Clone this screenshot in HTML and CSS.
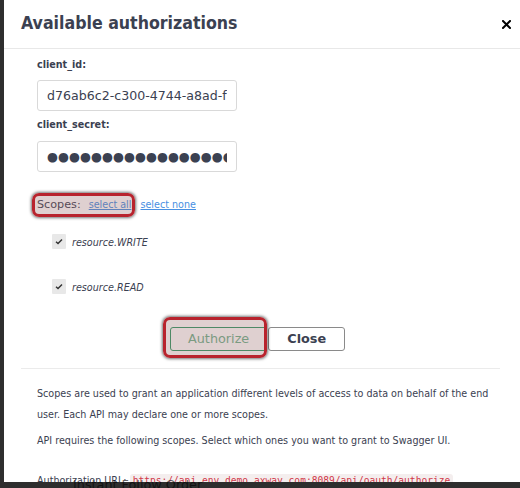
FILE: index.html
```html
<!DOCTYPE html>
<html lang="en">
<head>
<meta charset="utf-8">
<title>Available authorizations</title>
<link rel="stylesheet" href="styles.css">
</head>
<body>
<div class="page-text">Instant Follow Order</div>
<div class="modal">
  <div class="modal-header">
    <h3 class="title">Available authorizations</h3>
    <button class="close-x" aria-label="Close"><svg width="9" height="9" viewBox="0 0 9 9"><path d="M1 1L8 8M8 1L1 8" stroke="#000" stroke-width="2" stroke-linecap="square"/></svg></button>
  </div>
  <div class="modal-body">
    <label class="field-label">client_id:</label>
    <input class="field" type="text" value="d76ab6c2-c300-4744-a8ad-f3b1c9e2a7d4">
    <label class="field-label second">client_secret:</label>
    <input class="field secret" type="text" value="●●●●●●●●●●●●●●●●●●●●●●●●">
    <div class="scopes-row">
      <span class="scopes-title">Scopes:</span>
      <a class="link">select all</a>
      <a class="link">select none</a>
      <span class="hl hl-scopes"></span>
    </div>
    <div class="check-row">
      <span class="check-box"><svg width="8" height="7" viewBox="0 0 8 7"><path d="M1 3.8L3 5.6L7 1.4" fill="none" stroke="#333" stroke-width="1.4"/></svg></span>
      <span class="check-label">resource.WRITE</span>
    </div>
    <div class="check-row">
      <span class="check-box"><svg width="8" height="7" viewBox="0 0 8 7"><path d="M1 3.8L3 5.6L7 1.4" fill="none" stroke="#333" stroke-width="1.4"/></svg></span>
      <span class="check-label">resource.READ</span>
    </div>
    <div class="btn-row">
      <div class="btn-wrap">
        <button class="btn btn-auth">Authorize</button>
        <span class="hl hl-auth"></span>
      </div>
      <button class="btn btn-close">Close</button>
    </div>
  </div>
  <div class="sep"></div>
  <div class="desc">
    <p>Scopes are used to grant an application different levels of access to data on behalf of the end user. Each API may declare one or more scopes.</p>
    <p>API requires the following scopes. Select which ones you want to grant to Swagger UI.</p>
    <p class="url">Authorization URL: <code>https://api.env.demo.axway.com:8089/api/oauth/authorize</code></p>
  </div>
</div>
</body>
</html>
```
FILE: styles.css
```css
* { box-sizing: border-box; }
html, body { margin: 0; padding: 0; }
body {
  width: 520px;
  height: 488px;
  background: #2e2e2e;
  position: relative;
  overflow: hidden;
  font-family: "DejaVu Sans", sans-serif;
  color: #3b4151;
}
.page-text {
  position: absolute;
  left: 73px;
  top: 477px;
  font-size: 12.8px;
  line-height: 15px;
  color: rgba(0, 0, 0, 0.6);
  z-index: 2;
  white-space: nowrap;
}
.modal {
  position: absolute;
  left: 4px;
  top: 0;
  width: 516px;
  height: 482px;
  background: #fff;
  overflow: hidden;
}
.modal-header {
  height: 49px;
  border-bottom: 1px solid #e8e8e8;
  display: flex;
  align-items: center;
  justify-content: space-between;
  padding: 0 9px 0 17px;
}
.title {
  margin: 0;
  font-family: "DejaVu Sans Condensed", "DejaVu Sans", sans-serif;
  font-stretch: condensed;
  font-size: 17.6px;
  line-height: 19px;
  font-weight: bold;
  color: #3b4151;
  position: relative;
  top: -1px;
}
.close-x {
  border: 0;
  background: none;
  padding: 0;
  width: 9px;
  height: 9px;
  display: flex;
}
.modal-body { padding: 10px 0 0 33px; }
.field-label {
  display: block;
  font-size: 9.6px;
  line-height: 12px;
  font-weight: bold;
  margin-bottom: 9px;
}
.field-label.second { margin-bottom: 10px; }
.field {
  display: block;
  width: 200px;
  height: 31px;
  padding: 0 9px;
  border: 1px solid #d9d9d9;
  border-radius: 3px;
  font-family: "DejaVu Sans", sans-serif;
  font-size: 12.6px;
  color: #3b4151;
  margin: 0 0 8px;
  outline: none;
  background: #fff;
}
.field.secret { font-size: 12.6px; letter-spacing: 0; }
.scopes-row {
  position: relative;
  display: flex;
  align-items: baseline;
  height: 13px;
  margin-top: 26px;
}
.scopes-title {
  font-size: 11.2px;
  line-height: 13px;
  margin-right: 8px;
}
.link {
  font-size: 9.6px;
  color: #4990e2;
  text-decoration: underline;
  margin-right: 9px;
  cursor: pointer;
}
.hl {
  position: absolute;
  border: 3px solid #b8232d;
  border-radius: 7px;
  background: rgba(150, 100, 100, 0.3);
  box-shadow: 0 0 3px 1px rgba(0, 0, 0, 0.55);
  pointer-events: none;
}
.hl-scopes { left: -5px; top: -5px; width: 103px; height: 24px; }
.check-row {
  display: flex;
  align-items: center;
  height: 15px;
  padding-left: 15px;
  margin-top: 23px;
}
.check-row + .check-row { margin-top: 30px; }
.check-box {
  width: 14px;
  height: 15px;
  background: #e8e8e8;
  border-radius: 1px;
  display: flex;
  align-items: center;
  justify-content: center;
}
.check-label {
  margin-left: 6px;
  font-size: 9.6px;
  font-style: italic;
  position: relative;
  top: 1px;
}
.btn-row {
  display: flex;
  margin-top: 33px;
  padding-left: 133px;
}
.btn-wrap { position: relative; display: flex; }
.btn {
  font-family: "DejaVu Sans", sans-serif;
  font-size: 12.8px;
  height: 24px;
  line-height: 22px;
  padding: 0 17px;
  border-radius: 3px;
  background: #fff;
}
.btn-auth { border: 1px solid #2f9a66; color: #6fb38f; }
.btn-close {
  border: 1px solid #8a8a8a;
  color: #3b4151;
  font-weight: bold;
  padding: 0 18px;
  margin-left: 1px;
}
.hl-auth { left: -7px; top: -10px; width: 104px; height: 41px; }
.sep {
  height: 1px;
  background: #ebebeb;
  margin: 17px 20px 0 17px;
}
.desc { padding: 14px 18px 0 33px; font-size: 9.6px; }
.desc p { margin: 0; line-height: 21px; }
.desc p + p { margin-top: 5px; }
.desc p.url { margin-top: 19px; }
.desc code {
  font-family: "DejaVu Sans Mono", monospace;
  font-size: 9.6px;
  color: #d1394a;
  background: #f4eeee;
  padding: 1px 3px;
  border-radius: 3px;
}
```
